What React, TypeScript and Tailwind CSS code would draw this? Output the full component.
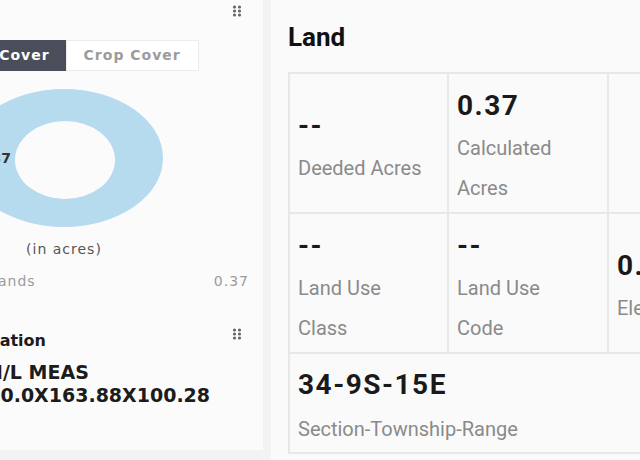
import React from 'react';

const Grip = () => (
  <svg width="10" height="12" viewBox="0 0 10 12" className="block">
    {[2, 6, 10].map(y => (
      <g key={y}>
        <circle cx="2.5" cy={y} r="1.6" fill="#666" />
        <circle cx="7.5" cy={y} r="1.6" fill="#666" />
      </g>
    ))}
  </svg>
);

const Cell = ({ value, label, className = '' }: { value: string; label: React.ReactNode; className?: string }) => (
  <div className={`border-r-2 border-b-2 border-[#e8e8e8] pl-[8px] pt-[6px] flex flex-col justify-center ${className}`}>
    <div className="text-[28px] leading-[44px] font-bold tracking-[1.5px] text-[#1a1a1a]">{value}</div>
    <div className="text-[20px] leading-[40px] text-[#8a8a8a]">{label}</div>
  </div>
);

export default function App() {
  return (
    <div className="flex w-[640px] h-[460px] bg-[#f3f3f3] overflow-hidden">
      <div className="w-[263px] h-[450px] shrink-0 bg-[#fbfbfb] flex flex-col overflow-hidden font-['DejaVu_Sans',sans-serif]">
        <div className="flex justify-end pr-[21px] pt-[5px] h-[18px]">
          <Grip />
        </div>

        <div className="mt-[22px] flex h-[31px]">
          <div className="-ml-[65px] px-[16px] bg-[#4a4e5a] text-white text-[14px] font-bold tracking-[1px] flex items-center whitespace-nowrap">
            Land Cover
          </div>
          <div className="w-[133px] bg-white border border-[#ececec] text-[#9b9b9b] text-[14px] font-bold tracking-[1px] flex items-center justify-center whitespace-nowrap">
            Crop Cover
          </div>
        </div>

        <svg width="263" height="140" viewBox="0 0 263 140" className="mt-[17px] block shrink-0">
          <path
            fillRule="evenodd"
            fill="#b6daee"
            d="M -35 70 a 99 69 0 1 0 198 0 a 99 69 0 1 0 -198 0 Z M 15 72 a 50 39 0 1 0 100 0 a 50 39 0 1 0 -100 0 Z"
          />
          <text x="11" y="75" textAnchor="end" fontSize="14" fontWeight="bold" fill="#333" fontFamily="DejaVu Sans, sans-serif">
            0.37
          </text>
        </svg>

        <div className="mt-[11px] w-[128px] text-center text-[14px] leading-[20px] tracking-[1px] text-[#555]">(in acres)</div>

        <div className="mt-[12px] flex justify-between pr-[14px] text-[14px] leading-[20px] tracking-[1px] text-[#9b9b9b]">
          <span className="-ml-[28px]">Uplands</span>
          <span>0.37</span>
        </div>

        <div className="mt-[37px] flex justify-between items-start pr-[21px]">
          <div className="-ml-[31px] pt-[3px] text-[16px] leading-[20px] font-bold text-[#1c1c1c]">Location</div>
          <Grip />
        </div>

        <div className="mt-[10px] text-[19px] leading-[23px] font-bold text-[#1c1c1c] whitespace-nowrap">
          <div className="-ml-[16px]">M/L MEAS</div>
          <div className="-ml-[26px]">100.0X163.88X100.28</div>
        </div>
      </div>

      <div className="ml-[8px] flex-1 min-w-0 bg-[#fafafa] overflow-hidden font-['Roboto',sans-serif] pl-[17px]">
        <h2 className="pt-[21px] text-[26px] leading-[32px] font-bold text-[#111]">Land</h2>
        <div className="mt-[19px] w-[480px] grid grid-cols-[159px_160px_161px] grid-rows-[140px_140px_100px] border-l-2 border-t-2 border-[#e8e8e8]">
          <Cell value="--" label="Deeded Acres" />
          <Cell value="0.37" label={<>Calculated<br />Acres</>} />
          <div className="border-r-2 border-b-2 border-[#e8e8e8]" />
          <Cell value="--" label={<>Land Use<br />Class</>} />
          <Cell value="--" label={<>Land Use<br />Code</>} />
          <Cell value="0.00" label="Elevation" />
          <div className="col-span-3 border-r-2 border-b-2 border-[#e8e8e8] pl-[8px] pt-[9px]">
            <div className="text-[28px] leading-[44px] font-bold tracking-[1.5px] text-[#1a1a1a]">34-9S-15E</div>
            <div className="mt-[2px] text-[20px] leading-[40px] text-[#8a8a8a]">Section-Township-Range</div>
          </div>
        </div>
      </div>
    </div>
  );
}
